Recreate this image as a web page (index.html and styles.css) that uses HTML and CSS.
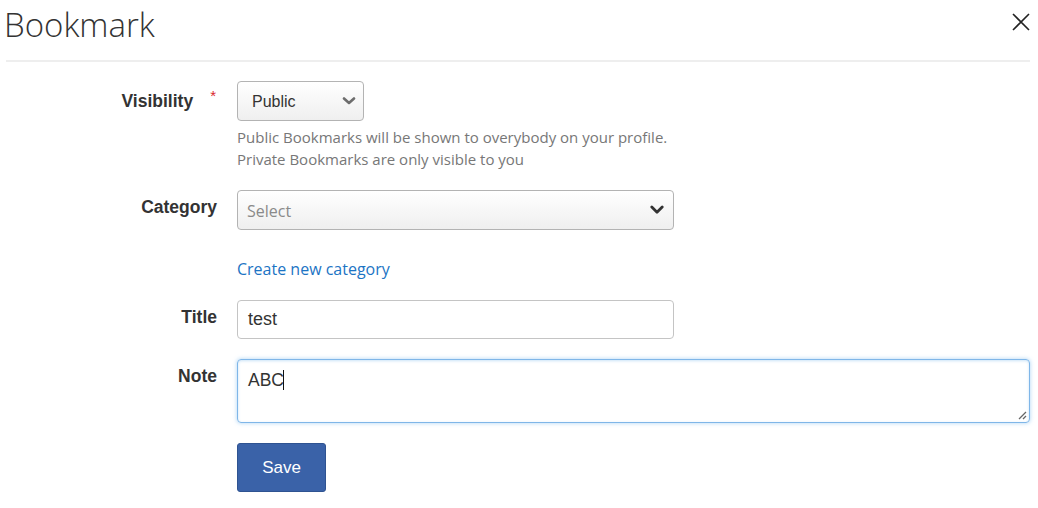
FILE: index.html
```html
<!DOCTYPE html>
<html lang="en">
<head>
<meta charset="utf-8">
<title>Bookmark</title>
<link rel="stylesheet" href="styles.css">
</head>
<body>
<div class="modal">
  <header class="modal-header">
    <h1 class="modal-title">Bookmark</h1>
    <button class="close" type="button" aria-label="Close">
      <svg width="18" height="18" viewBox="0 0 18 18"><path d="M1 1 L17 17 M17 1 L1 17" stroke="#222" stroke-width="1.6" fill="none"/></svg>
    </button>
  </header>
  <form class="form">
    <div class="row">
      <div class="label label-vis">Visibility<span class="req">*</span></div>
      <div class="control">
        <div class="select select-small">
          <span class="value">Public</span>
          <svg class="chev-soft" width="14" height="10" viewBox="0 0 14 10"><path d="M2 2.5 L7 7 L12 2.5" stroke="#555" stroke-width="2.6" fill="none" stroke-linecap="round" stroke-linejoin="round" opacity="0.85"/></svg>
        </div>
        <p class="help">Public Bookmarks will be shown to overybody on your profile.<br>Private Bookmarks are only visible to you</p>
      </div>
    </div>
    <div class="row">
      <div class="label">Category</div>
      <div class="control">
        <div class="select select-wide">
          <span class="placeholder">Select</span>
          <svg width="14" height="10" viewBox="0 0 14 10"><path d="M1.8 2 L7 7.2 L12.2 2" stroke="#333" stroke-width="2.8" fill="none" stroke-linecap="round" stroke-linejoin="round"/></svg>
        </div>
        <a class="link" href="#">Create new category</a>
      </div>
    </div>
    <div class="row">
      <div class="label">Title</div>
      <div class="control">
        <div class="input">test</div>
      </div>
    </div>
    <div class="row">
      <div class="label">Note</div>
      <div class="control">
        <div class="textarea">ABC<span class="caret"></span>
          <svg class="grip" width="10" height="10" viewBox="0 0 10 10"><path d="M9 2 L2 9 M9 6 L6 9" stroke="#666" stroke-width="1.3" fill="none"/></svg>
        </div>
      </div>
    </div>
    <div class="row">
      <div class="label"></div>
      <div class="control">
        <button class="btn" type="button">Save</button>
      </div>
    </div>
  </form>
</div>
</body>
</html>
```
FILE: styles.css
```css
* { box-sizing: border-box; }
html, body { margin: 0; padding: 0; background: #fff; }
body { font-family: "Liberation Sans", Arial, sans-serif; color: #333; }

.modal { padding: 0 8px 0 6px; }

.modal-header {
  display: flex;
  justify-content: space-between;
  align-items: flex-start;
  border-bottom: 2px solid #eeeeee;
  height: 62px;
}
.modal-title {
  margin: 0;
  padding-top: 5px;
  margin-left: -2px;
  font-family: "Open Sans", sans-serif;
  font-weight: 300;
  font-size: 33px;
  line-height: 40px;
  color: #333;
}
.close {
  border: 0;
  background: none;
  padding: 0;
  margin-top: 13px;
  width: 18px;
  height: 18px;
  cursor: pointer;
}
.close svg { display: block; }

.form { padding-top: 19px; }
.row {
  display: grid;
  grid-template-columns: 211px 1fr;
  column-gap: 20px;
  margin-bottom: 20px;
}
.label {
  text-align: right;
  font-weight: bold;
  font-size: 17.5px;
  line-height: 20px;
  padding-top: 7px;
  color: #333;
}
.label-vis { padding-top: 10px; }
.req {
  display: inline-block;
  color: #d9272e;
  font-weight: normal;
  font-size: 15px;
  margin-left: 17px;
  vertical-align: top;
  margin-top: -5px;
  margin-right: 1px;
}
.control { min-width: 0; }

.select {
  display: flex;
  align-items: center;
  justify-content: space-between;
  height: 40px;
  border: 1px solid #b3b3b3;
  border-radius: 4px;
  background: linear-gradient(#ffffff, #efefef);
  font-size: 16px;
}
.select-small { width: 127px; padding: 0 7px 0 14px; color: #333; }
.select-small .value { padding-top: 1px; }
.chev-soft { filter: blur(0.5px); }
.select-wide { width: 437px; height: 40px; padding: 0 9px 0 9px; }
.placeholder {
  font-family: "Open Sans", sans-serif;
  font-size: 16px;
  color: #8a8a8a;
  padding-top: 1px;
}
.select svg { display: block; }

.help {
  margin: 5px 0 0;
  font-family: "Open Sans", sans-serif;
  font-size: 15px;
  line-height: 22px;
  color: #777;
}

.link {
  display: inline-block;
  margin-top: 28px;
  font-family: "Open Sans", sans-serif;
  font-size: 16px;
  line-height: 22px;
  color: #1c74c4;
  text-decoration: none;
}

.input {
  width: 437px;
  height: 39px;
  border: 1px solid #c4c4c4;
  border-radius: 4px;
  padding: 0 10px;
  font-size: 18px;
  line-height: 37px;
  color: #333;
}

.textarea {
  position: relative;
  height: 64px;
  border: 1px solid #7fb6e8;
  border-radius: 4px;
  padding: 9px 10px;
  font-size: 17.5px;
  line-height: 22px;
  color: #333;
  box-shadow: inset 0 1px 3px rgba(102, 175, 233, 0.35), 0 0 4px rgba(102, 175, 233, 0.55);
}
.caret {
  display: inline-block;
  width: 1px;
  height: 20px;
  background: #111;
  vertical-align: -4px;
  margin-left: -1px;
}
.grip { position: absolute; right: 2px; bottom: 2px; }

.btn {
  width: 89px;
  height: 49px;
  background: #3a62a8;
  border: 1px solid #2f5391;
  border-radius: 3px;
  color: #fff;
  font-family: "Liberation Sans", Arial, sans-serif;
  font-size: 17px;
  cursor: pointer;
}
```
